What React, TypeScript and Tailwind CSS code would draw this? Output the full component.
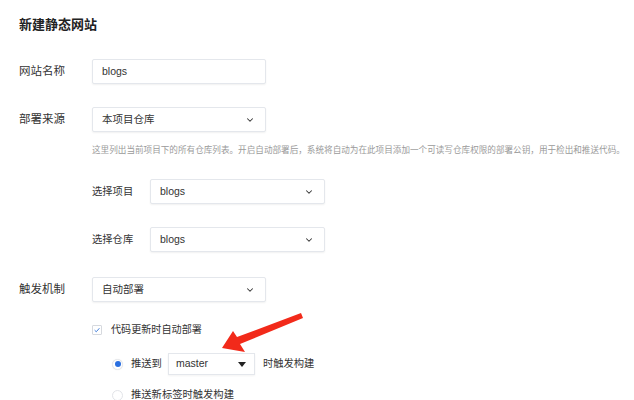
import { ChevronDown } from "lucide-react";

const font = { fontFamily: '"Liberation Sans", "Noto Sans CJK SC", sans-serif' };

function Select({ value, width }: { value: string; width: string }) {
  return (
    <div
      className={`${width} flex h-[25px] items-center justify-between rounded-[2px] border border-[#e4e7ec] bg-white pl-[9px] pr-[10px] text-[10.5px] text-[#333] shadow-[0_1px_2px_rgba(0,0,0,0.06)]`}
    >
      <span>{value}</span>
      <ChevronDown className="h-[10px] w-[10px] text-[#333]" strokeWidth={2.5} />
    </div>
  );
}

export default function App() {
  return (
    <div
      className="relative h-[400px] w-[634px] overflow-hidden bg-white pl-[19px] pt-[16px] text-[#333]"
      style={font}
    >
      <h1 className="h-[18px] text-[13px] font-semibold leading-[18px] text-[#222]">
        新建静态网站
      </h1>

      <div className="mt-[25px] flex h-[25px] items-center">
        <div className="w-[73px] text-[11.5px]">网站名称</div>
        <div className="flex h-[25px] w-[174px] items-center rounded-[2px] border border-[#e4e7ec] bg-white pl-[9px] text-[10.5px] shadow-[0_1px_2px_rgba(0,0,0,0.06)]">
          blogs
        </div>
      </div>

      <div className="mt-[23px] flex h-[25px] items-center">
        <div className="w-[73px] text-[11.5px]">部署来源</div>
        <Select value="本项目仓库" width="w-[174px]" />
      </div>

      <p className="ml-[73px] mt-[12px] h-[12px] whitespace-nowrap text-[8.6px] leading-[12px] text-[#9a9a9a]">
        这里列出当前项目下的所有仓库列表。开启自动部署后，系统将自动为在此项目添加一个可读写仓库权限的部署公钥，用于检出和推送代码。
      </p>

      <div className="ml-[73px] mt-[23px] flex h-[25px] items-center">
        <div className="w-[58px] text-[10.3px]">选择项目</div>
        <Select value="blogs" width="w-[175px]" />
      </div>

      <div className="ml-[73px] mt-[23px] flex h-[25px] items-center">
        <div className="w-[58px] text-[10.3px]">选择仓库</div>
        <Select value="blogs" width="w-[175px]" />
      </div>

      <div className="mt-[25px] flex h-[25px] items-center">
        <div className="w-[73px] text-[11.5px]">触发机制</div>
        <Select value="自动部署" width="w-[174px]" />
      </div>

      <div className="ml-[73px] mt-[21px] flex h-[14px] items-center">
        <span className="flex h-[10px] w-[10px] items-center justify-center rounded-[1px] border border-[#d6d9de] bg-white">
          <svg viewBox="0 0 10 10" className="h-[8px] w-[8px]">
            <path d="M2 5.2 L4.1 7.2 L8 2.8" fill="none" stroke="#3d7bd9" strokeWidth="1.2" />
          </svg>
        </span>
        <span className="ml-[9px] text-[10.1px]">代码更新时自动部署</span>
      </div>

      <div className="ml-[93px] mt-[16px] flex h-[22px] items-center">
        <span className="flex h-[11px] w-[11px] items-center justify-center rounded-full border border-[#e6e8ec] bg-white shadow-[0_0_1px_rgba(0,0,0,0.1)]">
          <span className="h-[6px] w-[6px] rounded-full bg-[#2a6fe0]" />
        </span>
        <span className="ml-[8px] text-[10.3px]">推送到</span>
        <div className="ml-[6px] flex h-[22px] w-[87px] items-center justify-between border border-[#e4e7ec] bg-white pl-[7px] pr-[8px] text-[10.5px] shadow-[0_1px_2px_rgba(0,0,0,0.05)]">
          <span>master</span>
          <svg viewBox="0 0 8 5" className="h-[5px] w-[8px]">
            <path d="M0 0 H8 L4 5 Z" fill="#222" />
          </svg>
        </div>
        <span className="ml-[8px] text-[10.3px]">时触发构建</span>
      </div>

      <div className="ml-[93px] mt-[13px] flex h-[14px] items-center">
        <span className="h-[11px] w-[11px] rounded-full border border-[#e2e4e8] bg-white" />
        <span className="ml-[8px] text-[10.3px]">推送新标签时触发构建</span>
      </div>

      <svg className="pointer-events-none absolute left-0 top-0" width="634" height="400">
        <polygon
          points="222,348 233,331 237,337 301,313 303,318 240,344 245,352"
          fill="#f22a1a"
        />
      </svg>
    </div>
  );
}
